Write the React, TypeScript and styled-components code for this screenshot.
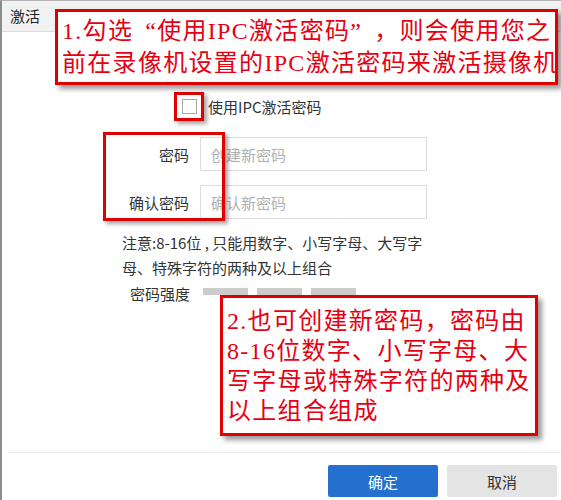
import styled, { createGlobalStyle } from "styled-components";

const GlobalStyle = createGlobalStyle`
  html, body {
    margin: 0;
    padding: 0;
    background: #fff;
  }
  body {
    font-family: "Noto Sans CJK SC", "Liberation Sans", sans-serif;
    color: #333;
  }
`;

export default function App() {
  return (
    <>
      <GlobalStyle />
      <Dialog>
        <Header>激活</Header>
        <Body>
          <CheckRow>
            <HighlightBox>
              <CheckBox />
            </HighlightBox>
            <CheckLabel>使用IPC激活密码</CheckLabel>
          </CheckRow>

          <Fields>
            <LabelBox />
            <FieldRow>
              <FieldLabel>密码</FieldLabel>
              <TextInput placeholder="创建新密码" />
            </FieldRow>
            <FieldRow>
              <FieldLabel>确认密码</FieldLabel>
              <TextInput placeholder="确认新密码" />
            </FieldRow>
          </Fields>

          <Note>
            注意:8-16位 , 只能用数字、小写字母、大写字
            <br />
            母、特殊字符的两种及以上组合
          </Note>

          <StrengthRow>
            <StrengthLabel>密码强度</StrengthLabel>
            <Bars>
              <Bar />
              <Bar />
              <Bar />
            </Bars>
          </StrengthRow>
        </Body>

        <Footer>
          <Button $primary>确定</Button>
          <Button>取消</Button>
        </Footer>

        <Callout $top={8} $left={55} $width={503} $line={32} $pad="3px 4px">
          1.勾选<Quote $side="right">“</Quote>使用IPC激活密码
          <Quote $side="left">”</Quote>，则会使用您之
          <br />
          前在录像机设置的IPC激活密码来激活摄像机
        </Callout>
        <Callout $top={294} $left={220} $width={318} $line={30} $pad="8px 4px 7px">
          2.也可创建新密码，密码由
          <br />
          8-16位数字、小写字母、大
          <br />
          写字母或特殊字符的两种及
          <br />
          以上组合组成
        </Callout>
      </Dialog>
    </>
  );
}

const Dialog = styled.div`
  position: relative;
  box-sizing: border-box;
  height: 500px;
  display: flex;
  flex-direction: column;
  border-left: 2px solid #8c8c8c;
  border-top: 1px solid #b4b4b4;
  overflow: hidden;
`;

const Header = styled.div`
  height: 30px;
  line-height: 30px;
  padding-left: 8px;
  background: #f2f2f2;
  border-bottom: 1px solid #dcdcdc;
  font-size: 15px;
  color: #222;
`;

const Body = styled.div`
  flex: 1;
  display: flex;
  flex-direction: column;
`;

const CheckRow = styled.div`
  display: flex;
  align-items: center;
  margin-top: 60px;
  padding-left: 172px;
`;

const HighlightBox = styled.div`
  box-sizing: border-box;
  width: 30px;
  height: 29px;
  border: 3px solid #e00000;
  box-shadow: 3px 3px 4px rgba(0, 0, 0, 0.35);
  display: flex;
  align-items: center;
  justify-content: center;
`;

const CheckBox = styled.span`
  box-sizing: border-box;
  width: 15px;
  height: 15px;
  border: 1px solid #a8a8a8;
  background: #fff;
`;

const CheckLabel = styled.span`
  margin-left: 4px;
  font-size: 15px;
  color: #333;
`;

const Fields = styled.div`
  position: relative;
  display: flex;
  flex-direction: column;
  gap: 14px;
  margin-top: 16px;
`;

const LabelBox = styled.div`
  position: absolute;
  left: 101px;
  top: -5px;
  width: 122px;
  height: 89px;
  box-sizing: border-box;
  border: 3px solid #e00000;
  box-shadow: 3px 3px 4px rgba(0, 0, 0, 0.35);
  pointer-events: none;
`;

const FieldRow = styled.div`
  display: flex;
  align-items: center;
  height: 34px;
`;

const FieldLabel = styled.span`
  width: 187px;
  text-align: right;
  margin-right: 11px;
  font-size: 15px;
  color: #333;
`;

const TextInput = styled.input`
  box-sizing: border-box;
  width: 227px;
  height: 34px;
  border: 1px solid #dedede;
  padding: 0 10px;
  font-family: "Noto Sans CJK SC", sans-serif;
  font-size: 15px;
  outline: none;
  &::placeholder {
    color: #b0b0b0;
  }
`;

const Note = styled.div`
  margin-top: 11px;
  padding-left: 120px;
  font-size: 15px;
  line-height: 25px;
  color: #333;
  white-space: nowrap;
`;

const StrengthRow = styled.div`
  display: flex;
  align-items: center;
  margin-top: 3px;
  padding-left: 128px;
  height: 20px;
`;

const StrengthLabel = styled.span`
  font-size: 15px;
  color: #333;
  margin-right: 13px;
`;

const Bars = styled.div`
  display: flex;
  gap: 9px;
  margin-top: -3px;
`;

const Bar = styled.span`
  width: 45px;
  height: 7px;
  background: #cccccc;
`;

const Footer = styled.div`
  display: flex;
  justify-content: flex-end;
  gap: 9px;
  margin-left: 6px;
  padding: 12px 4px 3px 0;
  border-top: 1px solid #ebebeb;
`;

const Button = styled.button<{ $primary?: boolean }>`
  width: 110px;
  height: 32px;
  border: none;
  border-radius: 2px;
  font-family: "Noto Sans CJK SC", sans-serif;
  font-size: 15px;
  background: ${(p) => (p.$primary ? "#2470cf" : "#e4e4e4")};
  color: ${(p) => (p.$primary ? "#fff" : "#333")};
`;

const Callout = styled.div<{
  $top: number;
  $left: number;
  $width: number;
  $line: number;
  $pad: string;
}>`
  position: absolute;
  top: ${(p) => p.$top}px;
  left: ${(p) => p.$left - 2}px;
  width: ${(p) => p.$width}px;
  box-sizing: border-box;
  padding: ${(p) => p.$pad};
  background: #fff;
  border: 3px solid #e00000;
  box-shadow: 4px 4px 5px rgba(0, 0, 0, 0.4);
  font-family: "Liberation Serif", "Noto Sans CJK SC", serif;
  font-size: 24px;
  letter-spacing: 1.3px;
  line-height: ${(p) => p.$line}px;
  color: #e60012;
  white-space: nowrap;
`;

const Quote = styled.span<{ $side: "left" | "right" }>`
  display: inline-block;
  width: 1em;
  text-align: ${(p) => p.$side};
`;
